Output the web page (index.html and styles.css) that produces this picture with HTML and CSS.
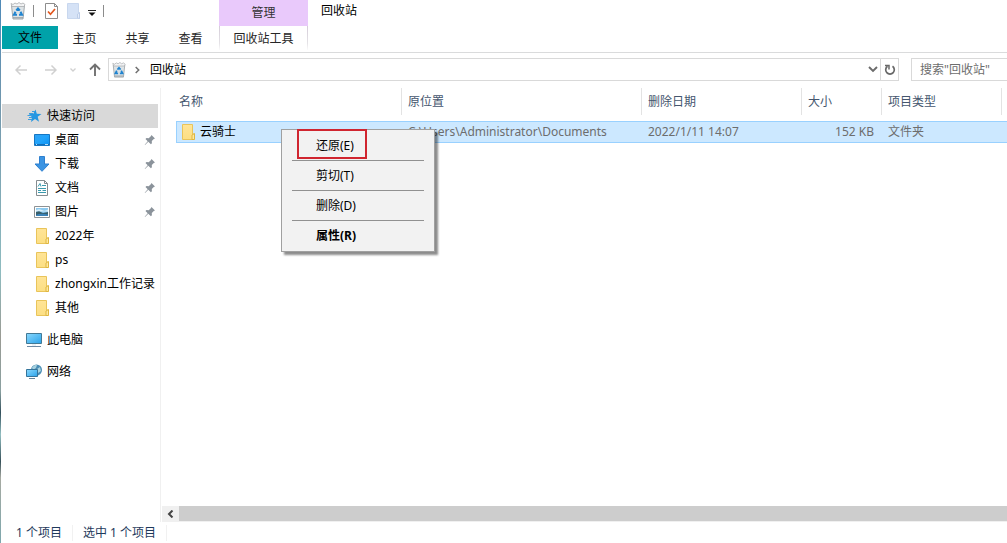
FILE: index.html
```html
<!DOCTYPE html>
<html lang="zh-CN">
<head>
<meta charset="utf-8">
<title>回收站</title>
<link rel="stylesheet" href="styles.css">
</head>
<body>
<svg class="defs" aria-hidden="true">
  <defs>
    <linearGradient id="g-folder" x1="0" y1="0" x2="0" y2="1"><stop offset="0" stop-color="#ffe497"/><stop offset="1" stop-color="#fcdf83"/></linearGradient>
    <linearGradient id="g-blue" x1="0" y1="0" x2="1" y2="1"><stop offset="0" stop-color="#2fa3f5"/><stop offset="0.5" stop-color="#22a4fb"/><stop offset="1" stop-color="#0b8ff0"/></linearGradient>
    <linearGradient id="g-screen" x1="0" y1="0" x2="1" y2="1"><stop offset="0" stop-color="#8ad8fd"/><stop offset="1" stop-color="#2ba3ea"/></linearGradient>
  </defs>
  <symbol id="bin" viewBox="0 0 16 18">
    <path d="M1.500 3.500L3 17h10l1.500-13.500z" fill="#dde3e6" stroke="#a3a9ad"/>
    <path d="M1 1.500l2 1 2-1.500 2 1 2-1.500 2 1.500 2-1 2 1.500-1 2H2z" fill="#f2f3f4" stroke="#a9acae" stroke-width=".8"/>
    <path d="M3 15.800h10" stroke="#8f989e"/>
    <path d="M6.300 8.500L8 6.500l1.800 2M5.500 9.800L4 12.800h3M9 12.800h3l-1.500-3" fill="none" stroke="#2084d0" stroke-width="2"/>
  </symbol>
  <symbol id="folder" viewBox="0 0 16 16">
    <path d="M2.500.5h10V10h1.500v5.500H2.500z" fill="url(#g-folder)" stroke="#e9c45a"/>
    <path d="M12 15.500V11L14.500 9.500v6z" fill="#ffe99f" stroke="#dfb640"/>
  </symbol>
  <symbol id="pin" viewBox="0 0 12 12">
    <path d="M7.500 1l3.500 3.500-1.200.5-2 2 .1 2.200-1 1-2.600-2.500L1 11l-.3-.3 3-3.500L1.500 5l1-1 2.200.2 2.100-2z" fill="#8b939b"/>
  </symbol>
</svg>

<header class="ribbon">
  <div class="ribbon-left">
    <div class="quick">
      <svg class="bin"><use href="#bin"/></svg>
      <i class="bar"></i>
      <svg class="check" viewBox="0 0 13 16"><path d="M.5.5h9l3 3v12H.5z" fill="#fff" stroke="#8d8d8d"/><path d="M9.500.5v3h3" fill="none" stroke="#8d8d8d"/><path d="M3 8.500l2.500 2.800L10 6" fill="none" stroke="#e2571f" stroke-width="1.700"/></svg>
      <svg class="new" viewBox="0 0 13 16"><path d="M.5.5h11V10h1v5.500H.5z" fill="#d5e2f6" stroke="#c8d7ee"/><path d="M10.500 15v-4l2-1.500v6z" fill="#e3ecfa" stroke="#bdcde8"/></svg>
      <svg class="drop" viewBox="0 0 8 6"><path d="M0 .5h8" stroke="#222"/><path d="M.5 2.500h7L4 6z" fill="#111"/></svg>
      <i class="bar"></i>
    </div>
    <nav class="tabs">
      <button class="tab file">文件</button>
      <button class="tab">主页</button>
      <button class="tab">共享</button>
      <button class="tab">查看</button>
    </nav>
  </div>
  <div class="context">
    <div class="context-name">管理</div>
    <button class="tab context-tab">回收站工具</button>
  </div>
  <h1 class="title">回收站</h1>
</header>

<div class="nav">
  <div class="arrows">
    <button aria-label="后退"><svg width="12" height="12" viewBox="0 0 12 12"><path d="M12 6H1M5.500 1.500L1 6l4.500 4.500" fill="none" stroke="#d0d0d0" stroke-width="1.500"/></svg></button>
    <button aria-label="前进"><svg width="12" height="12" viewBox="0 0 12 12"><path d="M0 6h11M6.500 1.500L11 6l-4.500 4.500" fill="none" stroke="#d0d0d0" stroke-width="1.500"/></svg></button>
    <button aria-label="最近"><svg width="6" height="4" viewBox="0 0 6 4"><path d="M.5.5L3 3 5.500.5" fill="none" stroke="#d0d0d0" stroke-width="1.300"/></svg></button>
    <button aria-label="向上"><svg width="12" height="13" viewBox="0 0 12 13"><path d="M6 13V1.500M1 6.500l5-5 5 5" fill="none" stroke="#717171" stroke-width="1.900"/></svg></button>
  </div>
  <div class="address">
    <svg class="bin"><use href="#bin"/></svg>
    <svg class="chev" viewBox="0 0 5 8"><path d="M.7 1l3 3-3 3" fill="none" stroke="#707070" stroke-width="1.500"/></svg>
    <span class="crumb">回收站</span>
    <button class="history" aria-label="历史记录"><svg width="10" height="7" viewBox="0 0 10 7"><path d="M1 1l4 4 4-4" fill="none" stroke="#6b6b6b" stroke-width="1.900"/></svg></button>
    <button class="refresh" aria-label="刷新"><svg width="12" height="12" viewBox="0 0 12 12"><path d="M8.500 2.300A4.300 4.300 0 1 1 3.500 2.300" fill="none" stroke="#686868" stroke-width="1.700"/><path d="M1 1.500h4v4" fill="none" stroke="#686868" stroke-width="1.500"/></svg></button>
  </div>
  <input class="search" type="text" aria-label="搜索" placeholder='搜索"回收站"'>
</div>

<main class="main">
  <aside class="side">
    <a class="item root active" href="#"><svg viewBox="0 0 16 16"><path d="M9.500 1.500l1.300 4.300 4.700.2-3.800 2.700 1.300 5-4-2.700L5 14l1-4.700-3-3 4.300-.5z" fill="#2597e2"/><path d="M3 5.500h4M1.500 7.500h5M3 9.500h3M2 11.500h4M6 3.500h3" stroke="#3b9ee0"/></svg>快速访问</a>
    <a class="item" href="#"><svg viewBox="0 0 16 16"><path d="M.5 2.500h15v11H.5z" fill="url(#g-blue)" stroke="#1677c3"/><path d="M1 12.500h14" stroke="#126eb9"/><path d="M2 12.500h1M11 12.500h3" stroke="#b4ddf8"/></svg>桌面<svg class="pin"><use href="#pin"/></svg></a>
    <a class="item" href="#"><svg viewBox="0 0 16 16"><path d="M5.500.5h5v7.500h4.500L8 15.300 1 8h4.500z" fill="#3b94e3" stroke="#2f80cf"/></svg>下载<svg class="pin"><use href="#pin"/></svg></a>
    <a class="item" href="#"><svg viewBox="0 0 16 16"><path d="M2.500.5h8l3 3v12h-11z" fill="#fff" stroke="#858d91"/><path d="M10.500.5v3h3" fill="none" stroke="#858d91"/><path d="M4 6.500l2-3 1 3M8 5.500h4M4 8.500h8M4 10.500h3M8.500 10.500H12M4 12.500h8" fill="none" stroke="#3b9aae"/></svg>文档<svg class="pin"><use href="#pin"/></svg></a>
    <a class="item" href="#"><svg viewBox="0 0 16 16"><path d="M.5 2.500h15v11H.5z" fill="#fff" stroke="#8d9295"/><path d="M2 4h12v8H2z" fill="#8bc9ef"/><path d="M2 6q3-1.500 6 0t6-.5v2H2z" fill="#d7edf7"/><path d="M2 8l3-.7 4 1.700 5-1v4H2z" fill="#385f6b"/><path d="M2 11q5-2 12-.5V12H2z" fill="#3a82b8"/></svg>图片<svg class="pin"><use href="#pin"/></svg></a>
    <a class="item" href="#"><svg><use href="#folder"/></svg>2022年</a>
    <a class="item" href="#"><svg><use href="#folder"/></svg>ps</a>
    <a class="item" href="#"><svg><use href="#folder"/></svg>zhongxin工作记录</a>
    <a class="item" href="#"><svg><use href="#folder"/></svg>其他</a>
    <a class="item root spaced" href="#"><svg viewBox="0 0 16 16"><path d="M.5 1.500h15v10H.5z" fill="url(#g-screen)" stroke="#437995"/><path d="M6 13h4" stroke="#d5e4ed"/><path d="M1 14.500h14" stroke="#6f8aa3"/></svg>此电脑</a>
    <a class="item root spaced" href="#"><svg viewBox="0 0 16 16"><circle cx="10.500" cy="6" r="5.500" fill="#4a8db5"/><path d="M6 3.500q3-3.500 5-2.500l-1 3-3 2zM11 5l3-2 1 4-3 2z" fill="#a8d2df"/><path d="M.5 5.500h11v7H.5z" fill="url(#g-screen)" stroke="#35749a"/><path d="M3 14.500h6" stroke="#668399"/></svg>网络</a>
  </aside>

  <section class="content">
    <table class="files">
      <colgroup><col class="c-name"><col class="c-place"><col class="c-date"><col class="c-size"><col class="c-type"><col></colgroup>
      <thead>
        <tr><th><div>名称</div></th><th><div>原位置</div></th><th><div>删除日期</div></th><th><div>大小</div></th><th><div>项目类型</div></th><th></th></tr>
      </thead>
      <tbody>
        <tr><td class="name"><div><svg><use href="#folder"/></svg>云骑士</div></td><td>C:\Users\Administrator\Documents</td><td>2022/1/11 14:07</td><td class="size">152 KB</td><td>文件夹</td><td></td></tr>
      </tbody>
    </table>
    <div class="scroll">
      <button aria-label="向左滚动"><svg width="7" height="8" viewBox="0 0 7 8"><path d="M5.500.5L2 4l3.500 3.500" fill="none" stroke="#444" stroke-width="2"/></svg></button>
      <div class="thumb"></div>
    </div>
  </section>
</main>

<footer class="status"><span>1 个项目</span><span>选中 1 个项目</span></footer>

<div class="menu" role="menu">
  <button class="marked" role="menuitem">还原(E)</button>
  <hr>
  <button role="menuitem">剪切(T)</button>
  <hr>
  <button role="menuitem">删除(D)</button>
  <hr>
  <button class="default" role="menuitem">属性(R)</button>
</div>
</body>
</html>
```
FILE: styles.css
```css
*, ::after { box-sizing: border-box; }
body {
  margin: 0;
  height: 100vh;
  display: flex;
  flex-direction: column;
  overflow: hidden;
  position: relative;
  padding-left: 2px;
  background: linear-gradient(#4f8ab8, #7398ad 20%, #8fbcc0 50%, #9a9b94 62%, #8aa0a0 72%, #33505c 76%, #93bec1 80%, #37515a 85%, #a7aaa2 88%, #7da7ad) 0 0 / 1px 100% no-repeat #fff;
  font: 12px/16px "Noto Sans", "Noto Sans CJK SC", sans-serif;
  color: #000;
}
button, input { font: inherit; color: inherit; background: none; border: 0; padding: 0; margin: 0; }
svg { display: block; flex: none; }
a { color: inherit; text-decoration: none; }
.defs { position: absolute; width: 0; height: 0; }

.ribbon { display: flex; height: 53px; flex: none; border-bottom: 1px solid #dadbdc; }
.ribbon-left { width: 217px; }
.quick { display: flex; align-items: center; height: 26px; padding: 0 0 4px 8px; }
.bin { width: 16px; height: 18px; }
.bar { width: 1px; height: 12px; margin: 0 11px 0 7px; background: #8c8c8c; }
.check, .new { width: 13px; height: 16px; margin-right: 9px; }
.new { margin-right: 8px; }
.drop { width: 8px; height: 6px; margin-top: 4px; }
.tabs { display: flex; }
.tab { width: 53px; height: 24px; padding-top: 1px; color: #262626; white-space: nowrap; }
.tab.file { width: 56px; background: #00a2a9; color: #000; height: 23px; }
.context { width: 89px; }
.context-name { height: 26px; line-height: 26px; text-align: center; background: #e9c9fb; color: #333; }
.context-tab { width: 100%; border-style: solid; border-width: 0 1px; border-image: linear-gradient(#d4cbd8, #e4e2e6 70%, #fff) 1; }
.title { margin: 0; padding: 3px 13px; font-size: 12px; line-height: 16px; font-weight: 400; }

.nav { display: flex; align-items: center; height: 35px; padding-bottom: 2px; flex: none; }
.arrows { display: flex; align-items: center; width: 106px; padding-left: 13px; gap: 18px; }
.arrows button:nth-child(3) { margin: 0 -5px; }
.address { display: flex; align-items: center; flex: 1; height: 23px; border: 1px solid #d9d9d9; padding-left: 2px; }
.address .bin { width: 16px; height: 16px; }
.chev { width: 5px; height: 8px; margin: 0 10px 0 8px; }
.crumb { flex: 1; }
.history { width: 14px; display: flex; justify-content: center; }
.refresh { width: 18px; height: 21px; border-left: 1px solid #d9d9d9; display: flex; align-items: center; justify-content: center; }
.search { width: 96px; height: 23px; margin-left: 12px; border: 1px solid #d9d9d9; border-right: 0; padding-left: 8px; border-radius: 0; }
.search::placeholder { color: #6d6d6d; opacity: 1; }

.main { display: flex; flex: 1; min-height: 0; }
.side { width: 159px; flex: none; padding: 16px 2px 0 0; border-right: 1px solid #f0f0f0; }
.item { display: flex; align-items: center; height: 24px; padding: 0 2px 0 32px; white-space: nowrap; }
.item svg { width: 16px; height: 16px; margin-right: 5px; }
.item .pin { width: 12px; height: 12px; margin: 0 0 0 auto; }
.item.root { padding-left: 24px; }
.item.active { background: #d9d9d9; }
.item.spaced { margin-top: 8px; }

.content { display: flex; flex-direction: column; flex: 1; min-width: 0; padding-left: 1px; }
.files { width: calc(100% - 14px); margin-left: 14px; table-layout: fixed; border-collapse: separate; border-spacing: 0; }
.c-name { width: 226px; }
.c-place { width: 240px; }
.c-date { width: 160px; }
.c-size { width: 80px; }
.c-type { width: 120px; }
.files th { padding: 0 0 6px; font-weight: 400; text-align: left; color: #45566e; vertical-align: top; }
.files th div { height: 27px; line-height: 27px; padding-left: 6px; border-right: 1px solid #e3e3e3; }
.files th:first-child div { padding-left: 3px; }
.files td { height: 22px; padding: 0 0 0 6px; color: #6d6d6d; white-space: nowrap; background: #cce8ff; border: solid #99d1ff; border-width: 1px 0; }
.files td.name { padding-left: 3px; color: #000; border-left-width: 1px; }
.name div { display: flex; align-items: center; }
.name svg { width: 16px; height: 16px; margin-right: 4px; }
.files td.size { text-align: right; padding-right: 8px; }

.scroll { display: flex; height: 16px; margin-top: auto; background: #f0f0f0; }
.scroll button { width: 17px; display: flex; align-items: center; justify-content: center; }
.thumb { flex: 1; height: 15px; background: #cdcdcd; }

.status { display: flex; height: 21px; flex: none; align-items: center; padding-top: 1px; color: #1e395b; }
.status span { padding: 0 10px; border-right: 1px solid #f1f1f1; }
.status span:first-child { padding-left: 14px; }

.menu { position: absolute; left: 281px; top: 129px; width: 154px; padding: 1px 0; background: #f2f2f2; border: 1px solid #a0a0a0; box-shadow: 3px 3px 2px rgba(0, 0, 0, .45); }
.menu button { display: block; width: 100%; height: 29px; padding-left: 34px; text-align: left; position: relative; }
.menu hr { height: 1px; margin: 0 10px; border: 0; background: #919191; }
.menu .default { font-weight: 700; }
.marked::after { content: ""; position: absolute; left: 15px; top: -2px; width: 70px; height: 30px; border: 2px solid #d0252f; }
```
